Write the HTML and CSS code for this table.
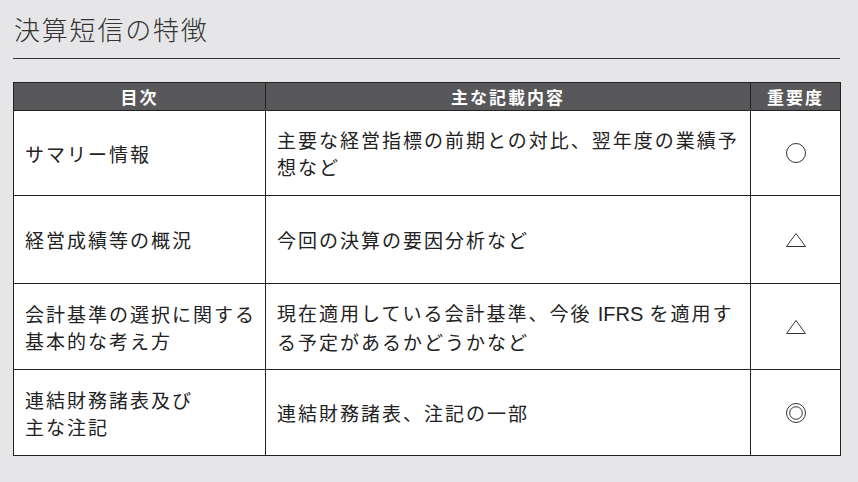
FILE: index.html
```html
<!DOCTYPE html>
<html lang="ja">
<head>
<meta charset="utf-8">
<title>決算短信の特徴</title>
<link rel="stylesheet" href="styles.css">
</head>
<body>
<div class="page">
  <h1 class="title">決算短信の特徴</h1>
  <table class="features">
    <colgroup>
      <col class="c1">
      <col class="c2">
      <col class="c3">
    </colgroup>
    <thead>
      <tr>
        <th>目次</th>
        <th>主な記載内容</th>
        <th>重要度</th>
      </tr>
    </thead>
    <tbody>
      <tr class="r1">
        <td>サマリー情報</td>
        <td>主要な経営指標の前期との対比、翌年度の業績予<br>想など</td>
        <td class="mark">
          <svg width="22" height="22" viewBox="0 0 22 22"><circle cx="11" cy="11" r="9.5" fill="none" stroke="#333" stroke-width="1"/></svg>
        </td>
      </tr>
      <tr class="r2">
        <td>経営成績等の概況</td>
        <td>今回の決算の要因分析など</td>
        <td class="mark">
          <svg width="22" height="16" viewBox="0 0 22 16"><polygon points="11,1.5 20.5,14.5 1.5,14.5" fill="none" stroke="#333" stroke-width="1"/></svg>
        </td>
      </tr>
      <tr class="r3">
        <td>会計基準の選択に関する<br>基本的な考え方</td>
        <td>現在適用している会計基準、今後 <span class="latin">IFRS</span> を適用す<br>る予定があるかどうかなど</td>
        <td class="mark">
          <svg width="22" height="16" viewBox="0 0 22 16"><polygon points="11,1.5 20.5,14.5 1.5,14.5" fill="none" stroke="#333" stroke-width="1"/></svg>
        </td>
      </tr>
      <tr class="r4">
        <td>連結財務諸表及び<br>主な注記</td>
        <td>連結財務諸表、注記の一部</td>
        <td class="mark">
          <svg width="22" height="22" viewBox="0 0 22 22"><circle cx="11" cy="11" r="9.5" fill="none" stroke="#333" stroke-width="1"/><circle cx="11" cy="11" r="6.3" fill="none" stroke="#333" stroke-width="1"/></svg>
        </td>
      </tr>
    </tbody>
  </table>
</div>
</body>
</html>
```

FILE: styles.css
```css
html, body {
  margin: 0;
  padding: 0;
  background: #e6e6e8;
}

.page {
  padding: 10px 18px 0 13px;
  font-family: "Noto Sans CJK JP", "Noto Sans", sans-serif;
  color: #222;
}

.title {
  margin: 0;
  padding: 0 0 11px 1px;
  font-size: 26px;
  line-height: 37px;
  font-weight: 300;
  letter-spacing: 1.8px;
  color: #333;
  border-bottom: 1px solid #333;
}

.features {
  margin-top: 23px;
  width: 827px;
  border-collapse: collapse;
  table-layout: fixed;
  background: #fff;
}

.c1 { width: 252px; }
.c2 { width: 485px; }
.c3 { width: 90px; }

.features th,
.features td {
  border: 1px solid #222;
}

.features th {
  height: 27px;
  padding: 0;
  background: #58585b;
  color: #fff;
  font-size: 17px;
  font-weight: 700;
  letter-spacing: 2px;
  line-height: 27px;
  text-align: center;
}

.features td {
  padding: 0 4px 0 11px;
  font-size: 19px;
  letter-spacing: 2px;
  line-height: 27px;
  white-space: nowrap;
  vertical-align: middle;
}

.latin {
  font-family: "Liberation Sans", Arial, sans-serif;
  font-size: 20px;
  letter-spacing: 0;
}

.r1 td { height: 84px; }
.r2 td { height: 87px; }
.r3 td { height: 85px; }
.r4 td { height: 85px; }

.features td.mark {
  padding: 0;
  text-align: center;
}

.mark svg {
  display: block;
  margin: 0 auto;
}
```
